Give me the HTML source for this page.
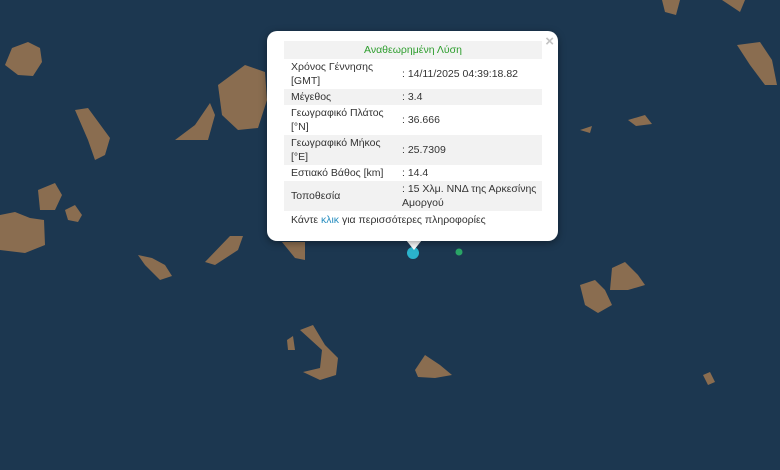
<!DOCTYPE html>
<html><head><meta charset="utf-8"><style>
html,body{margin:0;padding:0;width:780px;height:470px;overflow:hidden;background:#1c3750;font-family:"Liberation Sans",sans-serif}
svg{position:absolute;left:0;top:0}
.pop{position:absolute;left:267px;top:31px;width:291px;height:210px;background:#fff;border-radius:10px;box-shadow:0 2px 8px rgba(0,0,0,.4)}
.tip{position:absolute;left:406px;top:240px;width:0;height:0;border-left:8px solid transparent;border-right:8px solid transparent;border-top:10px solid #fff}
.x{position:absolute;right:4px;top:2px;color:#c3c3c3;font-size:15px;font-weight:bold}
table{position:absolute;left:17px;top:10px;width:258px;border-collapse:collapse;font-size:10.5px;color:#333;line-height:14px}
td{padding:1px 0 1px 7px;vertical-align:middle}
tr.g{background:#f2f2f2}
td.v{padding-left:6px;width:140px}
</style></head><body>
<svg width="780" height="470" viewBox="0 0 780 470">
<g fill="#8a6d50">
<path d="M5,65 L12,48 L28,42 L40,48 L42,62 L33,76 L18,75 Z"/>
<path d="M75,110 L88,108 L110,138 L105,155 L95,160 L88,140 Z"/>
<path d="M218,85 L245,65 L265,72 L267,100 L258,128 L238,130 L222,115 Z"/>
<path d="M175,140 L195,125 L210,103 L215,115 L208,140 L195,140 Z"/>
<path d="M38,190 L55,183 L62,195 L55,210 L40,210 Z"/>
<path d="M65,210 L75,205 L82,215 L78,222 L68,220 Z"/>
<path d="M0,215 L15,212 L30,218 L44,220 L45,245 L25,253 L0,250 Z"/>
<path d="M205,262 L230,236 L243,236 L238,250 L215,265 Z"/>
<path d="M138,255 L152,258 L165,265 L172,276 L160,280 L145,265 Z"/>
<path d="M282,242 L305,242 L305,260 L295,258 Z"/>
<path d="M580,285 L595,280 L605,290 L612,305 L598,313 L585,305 Z"/>
<path d="M612,268 L625,262 L638,275 L645,285 L628,290 L610,290 Z"/>
<path d="M300,330 L313,325 L325,345 L338,358 L336,375 L320,380 L303,372 L320,368 L322,350 Z"/>
<path d="M287,340 L293,336 L295,350 L288,350 Z"/>
<path d="M415,370 L425,355 L440,365 L452,375 L435,378 L418,377 Z"/>
<path d="M703,375 L710,372 L715,382 L708,385 Z"/>
<path d="M737,45 L760,42 L772,60 L777,85 L765,85 L750,65 Z"/>
<path d="M662,0 L680,0 L676,15 L665,12 Z"/>
<path d="M722,0 L745,0 L740,12 Z"/>
<path d="M628,120 L645,115 L652,124 L636,126 Z"/>
<path d="M580,130 L592,126 L590,133 Z"/>
</g>
<circle cx="413" cy="253" r="6" fill="#2bb3cc"/>
<circle cx="459" cy="252" r="3.5" fill="#2aa566"/>
</svg>
<div class="tip"></div>
<div class="pop"><div class="x">×</div>
<table>
<tr class="g"><td colspan="2" style="text-align:center;color:#2e9e2e;padding:2px 0">Αναθεωρημένη Λύση</td></tr>
<tr><td>Χρόνος Γέννησης<br>[GMT]</td><td class="v">: 14/11/2025 04:39:18.82</td></tr>
<tr class="g"><td>Μέγεθος</td><td class="v">: 3.4</td></tr>
<tr><td>Γεωγραφικό Πλάτος<br>[°N]</td><td class="v">: 36.666</td></tr>
<tr class="g"><td>Γεωγραφικό Μήκος<br>[°E]</td><td class="v">: 25.7309</td></tr>
<tr><td>Εστιακό Βάθος [km]</td><td class="v">: 14.4</td></tr>
<tr class="g"><td>Τοποθεσία</td><td class="v">: 15 Χλμ. ΝΝΔ της Αρκεσίνης Αμοργού</td></tr>
<tr><td colspan="2" style="padding-top:2px">Κάντε <span style="color:#2a8fc0">κλικ</span> για περισσότερες πληροφορίες</td></tr>
</table></div>
</body></html>
